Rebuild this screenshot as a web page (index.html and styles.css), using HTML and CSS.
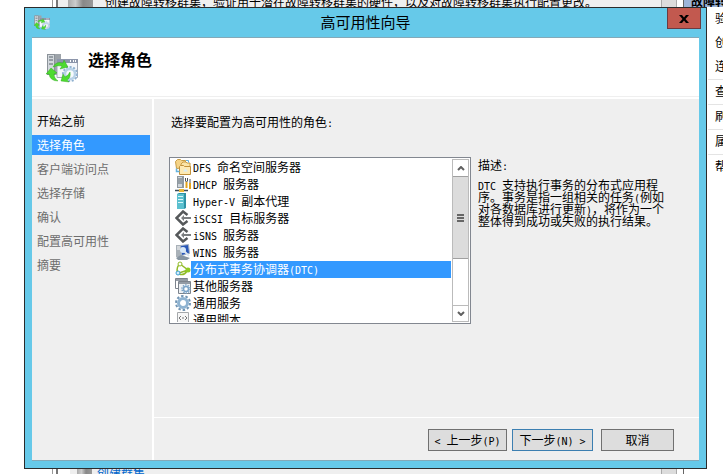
FILE: index.html
```
<!DOCTYPE html>
<html lang="zh-CN">

<head>
  <meta charset="UTF-8">
  <meta name="viewport" content="width=device-width, initial-scale=1.0">
  <title>高可用性向导</title>
  <link rel="stylesheet" href="styles.css">
</head>

<body>
  <!-- 图标 -->
  <svg class="defs" aria-hidden="true">
    <symbol id="i-wizard" viewBox="0 0 32 32">
      <path d="M1 1h14v21H1z" fill="#9da3a9" />
      <path d="M1 1h8v21H1z" fill="#8b9299" />
      <path d="M2 2h6v19H2z" fill="#d3d8dd" />
      <path d="M3 4h4M3 7h4M3 11h4" stroke="#59626b" stroke-width="1" />
      <path d="M11 6.500h20.500v18H11z" fill="#f5f7fb" stroke="#a3aab8" />
      <path d="M11 6h21v4H11z" fill="#8d96ab" />
      <path d="M24 8h1M27 8h1M29 8h1" stroke="#fff" stroke-width="2" />
      <circle cx="24" cy="21" r="7" fill="#eef5fb" stroke="#8fb0cf" stroke-width="2" stroke-dasharray="2 1.600" />
      <circle cx="24" cy="21" r="5" fill="#f7fafd" stroke="#b9d2e8" stroke-width="2.500" />
      <path d="M7 14q3-6 10-4l1-3 4 7-8 2 2-3q-4-1-9 1z" fill="#4edb30" stroke="#22a012" stroke-width=".4" />
      <path d="M0 21l5-6 6 5-3 1q0 4 4 7-8 0-9-7z" fill="#4edb30" stroke="#22a012" stroke-width=".4" />
      <path d="M24 19q1 6-3 8l2 2-8-1 2-7 2 3q3-1 5-5z" fill="#4edb30" stroke="#22a012" stroke-width=".4" />
    </symbol>
    <symbol id="i-dfs" viewBox="0 0 16 16">
      <path d="M.5 2.500l2-2h3l1 1h4v7l-9 1z" fill="#f5d488" stroke="#c79c45" />
      <path d="M6 5l2-2h3l1 1h3v6H6z" fill="#fbe5a6" stroke="#c79c45" />
      <path d="M4.500 7.500l1-1h3l1 1h6v8h-11z" fill="#fdeab3" stroke="#c0913b" />
      <path d="M8 12.500h5l-2.500-3z" fill="#d7ecf8" />
      <path d="M1.500 9.500v3h3" fill="none" stroke="#63b2de" stroke-width="1.500" />
      <path d="M11 1.500h2.500v2" fill="none" stroke="#63b2de" />
    </symbol>
    <symbol id="i-dhcp" viewBox="0 0 16 16">
      <path d="M2 0h7v12H2z" fill="#8f989f" />
      <path d="M3 1h4v10H3z" fill="#cfd5da" />
      <path d="M3 3h4M3 5h4M3 7h4" stroke="#5f6a73" />
      <path d="M11.500 6v6M15 7v6" fill="none" stroke="#e2a21c" stroke-width="2" />
      <path d="M10.500 2v3l1 1 1-1V2M15 3v4" fill="none" stroke="#4f5356" />
      <path d="M0 14.500h13" stroke="#3d4c58" stroke-width="1.500" />
      <path d="M4 13h5v3H4z" fill="#e8b638" />
    </symbol>
    <symbol id="i-hyperv" viewBox="0 0 16 16">
      <path d="M2 1l2-1h7v15l-2 1H2z" fill="#2d91a5" />
      <path d="M2 1h7v15H2z" fill="#5bc0cf" />
      <path d="M3 3.500h5M3 6.500h5M3 9.500h5" stroke="#d9f7fb" />
    </symbol>
    <symbol id="i-iscsi" viewBox="0 0 16 16">
      <path d="M12.500 5L8 1.500 1.500 8 8 14.500l4.500-3.500" fill="none" stroke="#55585a" stroke-width="2.500" />
      <path d="M6 8l3-3v2h7v2H9v2z" fill="#7b7e80" />
    </symbol>
    <symbol id="i-wins" viewBox="0 0 16 16">
      <path d="M1 1h5v12H1z" fill="#a9b1b8" />
      <path d="M2 3h3M2 5h3" stroke="#fff" />
      <path d="M5.500 1.500l8-1 1 9-8 2z" fill="#2857b8" stroke="#a9b6c5" />
      <circle cx="8" cy="6" r="3" fill="#d6e7f8" />
      <path d="M9 7l5 5" stroke="#dce6ee" stroke-width="2" />
      <path d="M1 14l5-3 9 3-3 2H3z" fill="#8795a1" />
    </symbol>
    <symbol id="i-dtc" viewBox="0 0 16 16">
      <path d="M5 3Q1 6 2.500 11M5 3l8 6-9 3M4 13q5 2 8-3" fill="none" stroke="#91bb27" stroke-width="1.500" />
      <circle cx="5" cy="3" r="2" fill="#fff" stroke="#91bb27" />
      <circle cx="3" cy="12" r="2" fill="#d8edf9" stroke="#3a9fd5" />
      <circle cx="13" cy="9" r="2.500" fill="#91cb24" />
    </symbol>
    <symbol id="i-other" viewBox="0 0 16 16">
      <path d="M.5.500h12v10H.5z" fill="#fff" stroke="#7c838c" />
      <path d="M3.500 3.500h12v12h-12z" fill="#eef1f4" stroke="#7c838c" />
      <path d="M1 1h12v2H1zM4 4h11v2H4z" fill="#939ba5" />
      <circle cx="11" cy="11" r="4" fill="#fff" stroke="#7ba3c7" stroke-width="1.500" stroke-dasharray="1.500 1" />
      <circle cx="11" cy="11" r="2.500" fill="none" stroke="#7ba3c7" stroke-width="1.500" />
    </symbol>
    <symbol id="i-gear" viewBox="0 0 16 16">
      <circle cx="8" cy="8" r="7" fill="none" stroke="#7295b4" stroke-width="2" stroke-dasharray="2.500 1.900" />
      <circle cx="8" cy="8" r="4.500" fill="#fff" stroke="#8fb3d1" stroke-width="3" />
    </symbol>
    <symbol id="i-script" viewBox="0 0 16 16">
      <path d="M2.500.5h11v15h-11z" fill="#f7f7f7" stroke="#a5a8ab" />
      <path d="M6 4L4 6l2 2M10 4l2 2-2 2M7 6h2" fill="none" stroke="#777" />
    </symbol>
  </svg>

  <!-- 后面的管理器窗口 -->
  <div class="manager">
    <div class="tree"></div>
    <div class="center">
      <div class="row">
        <span class="server"></span>
        <p>创建故障转移群集，验证用于潜在故障转移群集的硬件，以及对故障转移群集执行配置更改。</p>
      </div>
      <div class="row bottom">
        <span class="server"></span>
        <a href="#">创建群集...</a>
      </div>
    </div>
    <div class="track"></div>
    <div class="actions">
      <h2>故障转移群集管理器</h2>
      <ul>
        <li><a href="#">验证配置...</a></li>
        <li><a href="#">创建群集...</a></li>
        <li><a href="#">连接到群集...</a></li>
        <li class="line"><a href="#">查看</a></li>
        <li class="line"><a href="#">刷新</a></li>
        <li class="line"><a href="#">属性</a></li>
        <li class="line"><a href="#">帮助</a></li>
      </ul>
    </div>
  </div>

  <!-- 向导 -->
  <div class="dialog" role="dialog" aria-labelledby="title">
    <div class="titlebar">
      <svg class="icon"><use href="#i-wizard" /></svg>
      <h1 id="title">高可用性向导</h1>
      <button class="close" type="button" aria-label="关闭">
        <svg viewBox="0 0 10 8"><path d="M0 0h3l2 2.500L7 0h3L6.500 4 10 8H7L5 5.500 3 8H0l3.500-4z" /></svg>
      </button>
    </div>
    <div class="content">
      <div class="head">
        <svg class="logo"><use href="#i-wizard" /></svg>
        <h2>选择角色</h2>
      </div>
      <div class="main">
        <nav class="steps">
          <a class="done" href="#">开始之前</a>
          <a class="current" href="#">选择角色</a>
          <a href="#">客户端访问点</a>
          <a href="#">选择存储</a>
          <a href="#">确认</a>
          <a href="#">配置高可用性</a>
          <a href="#">摘要</a>
        </nav>
        <div class="page">
          <div class="body">
            <p class="tip" id="tip">选择要配置为高可用性的角色<i>:</i></p>
            <div class="pick">
              <div class="listbox">
                <ul aria-labelledby="tip">
                  <li><svg><use href="#i-dfs" /></svg><button type="button"><i>DFS </i>命名空间服务器</button></li>
                  <li><svg><use href="#i-dhcp" /></svg><button type="button"><i>DHCP </i>服务器</button></li>
                  <li><svg><use href="#i-hyperv" /></svg><button type="button"><i>Hyper-V </i>副本代理</button></li>
                  <li><svg><use href="#i-iscsi" /></svg><button type="button"><i>iSCSI </i>目标服务器</button></li>
                  <li><svg><use href="#i-iscsi" /></svg><button type="button"><i>iSNS </i>服务器</button></li>
                  <li><svg><use href="#i-wins" /></svg><button type="button"><i>WINS </i>服务器</button></li>
                  <li class="selected"><svg><use href="#i-dtc" /></svg><button type="button">分布式事务协调器<i>(DTC)</i></button></li>
                  <li><svg><use href="#i-other" /></svg><button type="button">其他服务器</button></li>
                  <li><svg><use href="#i-gear" /></svg><button type="button">通用服务</button></li>
                  <li><svg><use href="#i-script" /></svg><button type="button">通用脚本</button></li>
                </ul>
                <div class="scroll">
                  <button type="button" aria-label="向上滚动"><svg viewBox="0 0 8 5"><path d="M1 4l3-3 3 3" /></svg></button>
                  <div class="thumb"><span></span><span></span><span></span></div>
                  <button type="button" aria-label="向下滚动"><svg viewBox="0 0 8 5"><path d="M1 1l3 3 3-3" /></svg></button>
                </div>
              </div>
              <div class="desc">
                <h3>描述<i>:</i></h3>
                <p><i>DTC </i>支持执行事务的分布式应用程序。事务是指一组相关的任务<i>(</i>例如对各数据库进行更新<i>)</i>，将作为一个整体得到成功或失败的执行结果。</p>
              </div>
            </div>
          </div>
          <div class="foot">
            <button type="button"><i>&lt; </i>上一步<i>(P)</i></button>
            <button class="next" type="button">下一步<i>(N) &gt;</i></button>
            <button class="cancel" type="button">取消</button>
          </div>
        </div>
      </div>
    </div>
  </div>
</body>

</html>
```
FILE: styles.css
```
* {
  margin: 0;
  padding: 0;
  box-sizing: border-box;
  list-style: none;
}

body {
  height: 100vh;
  overflow: hidden;
  position: relative;
  background: #fff;
  color: #000;
  font: 12px/16px "Noto Sans CJK SC", sans-serif;
}

a {
  color: #000;
  text-decoration: none;
}

button {
  font: inherit;
  color: inherit;
}

/* 半角字符，宽度为汉字的一半 */
i {
  font: 10px/0 "DejaVu Sans Mono", monospace;
  white-space: pre-wrap;
}

.defs {
  display: none;
}

/* 后面的管理器窗口 */
.manager {
  display: flex;
  height: 100%;
}

.tree {
  width: 53px;
  border-right: 1px solid #999;
}

.center {
  flex: 1;
  display: flex;
  flex-direction: column;
  justify-content: space-between;
  margin-left: 3px;
  border-left: 2px solid #777;
  background: #efefef;
}

.row {
  display: flex;
  gap: 12px;
  height: 8px;
  padding-left: 10px;
  overflow: hidden;
  white-space: nowrap;
}

.row p {
  margin-top: -6px;
}

.row.bottom {
  height: 7px;
  padding-left: 7px;
  gap: 5px;
  border-left: 12px solid #fff;
}

.row a {
  color: #06c;
  margin-top: -2px;
}

.server {
  width: 25px;
  height: 7px;
  background: linear-gradient(90deg, #aaa, #ccc 30%, #888 60%, #999);
}

.bottom .server {
  width: 15px;
}

.track {
  width: 16px;
  background: #dcdcdc;
  border: solid #aaa;
  border-width: 0 1px;
}

.actions {
  width: 40px;
  margin-left: 6px;
  overflow: hidden;
  white-space: nowrap;
  border-left: 1px solid #666;
}

.actions h2 {
  height: 7px;
  padding-left: 7px;
  background: #9db5da;
  font-size: 12px;
  line-height: 2px;
}

.actions ul {
  padding-left: 24px;
}

.actions li {
  height: 24px;
  padding-left: 7px;
  line-height: 22px;
}

.actions .line {
  height: 25px;
  border-top: 1px solid #e4e4e4;
}

/* 向导窗口 */
.dialog {
  position: absolute;
  top: 7px;
  right: 16px;
  bottom: 5px;
  left: 24px;
  display: flex;
  flex-direction: column;
  padding: 0 7px 7px;
  border: 1px solid #2b2b2b;
  background: #66c9e9;
}

.titlebar {
  display: flex;
  height: 29px;
  align-items: center;
}

.titlebar .icon {
  width: 16px;
  height: 16px;
  margin-left: 2px;
}

.titlebar h1 {
  flex: 1;
  padding-left: 14px;
  text-align: center;
  font-size: 15px;
  line-height: 18px;
  padding-bottom: 2px;
  font-weight: normal;
}

.close {
  align-self: flex-start;
  width: 34px;
  height: 21px;
  margin-right: -2px;
  border: 1px solid #6b3b42;
  border-top: 0;
  background: #c2594f;
}

.close svg {
  width: 10px;
  height: 8px;
}

.content {
  flex: 1;
  display: flex;
  flex-direction: column;
  min-height: 0;
  border: solid #84a9b8;
  border-width: 1px 0;
  background: #efefef;
}

.head {
  display: flex;
  height: 61px;
  gap: 10px;
  padding: 13px 14px;
  background: linear-gradient(#fff 58px, #efefef 58px, #efefef 59px, #fff 59px);
}

.logo {
  width: 32px;
  height: 32px;
  margin-top: 2px;
}

.head h2 {
  font-size: 16px;
  line-height: 16px;
}

.main {
  flex: 1;
  display: flex;
}

.steps {
  width: 122px;
  padding: 12px 2px 0 0;
  border-right: 2px solid #fff;
}

.steps a {
  display: block;
  height: 20px;
  margin-bottom: 4px;
  padding-left: 5px;
  line-height: 20px;
  color: #6d6d6d;
}

.steps .done {
  color: #000;
}

.steps .current {
  background: #3399ff;
  color: #fff;
}

.page {
  flex: 1;
  display: flex;
  flex-direction: column;
}

.body {
  flex: 1;
  padding: 15px 27px 0 15px;
}

.tip {
  padding-left: 2px;
}

.pick {
  display: flex;
  gap: 7px;
  margin-top: 27px;
}

.listbox {
  display: flex;
  width: 302px;
  height: 167px;
  padding: 1px;
  border: 1px solid #828790;
  background: #fff;
}

.listbox ul {
  flex: 1;
  overflow: hidden;
}

.listbox li {
  display: flex;
  height: 17px;
  padding-left: 4px;
}

.listbox li svg {
  width: 16px;
  height: 16px;
}

.listbox li button {
  flex: 1;
  padding: 0 0 2px 2px;
  border: 0;
  background: none;
  text-align: left;
  line-height: 15px;
}

.listbox .selected button {
  background: #3399ff;
  color: #fff;
}

.scroll {
  display: flex;
  flex-direction: column;
  width: 17px;
  margin-left: 1px;
  border: 1px solid #bbb;
}

.scroll button {
  display: flex;
  align-items: center;
  justify-content: center;
  height: 16px;
  border: 0;
  background: #fff;
}

.scroll button:last-child {
  margin-top: auto;
  border-top: 1px solid #bbb;
}

.scroll svg {
  width: 8px;
  height: 5px;
  fill: none;
  stroke: #606060;
  stroke-width: 2;
}

.thumb {
  display: flex;
  flex-direction: column;
  align-items: center;
  justify-content: center;
  gap: 1px;
  height: 83px;
  border: solid #a0a0a0;
  border-width: 1px 0;
  background: #dcdcdc;
}

.thumb span {
  width: 7px;
  height: 2px;
  background: #666;
}

.desc {
  flex: 1;
}

.desc h3 {
  font-size: 12px;
  font-weight: normal;
}

.desc p {
  margin-top: 6px;
  line-height: 12px;
}

.foot {
  display: flex;
  justify-content: flex-end;
  height: 43px;
  padding: 11px 25px 9px 0;
  border-top: 1px solid #fff;
}

.foot button {
  width: 79px;
  margin-right: 5px;
  border: 1px solid #707070;
  background: #dddddd;
  line-height: 20px;
}

.foot .next {
  width: 81px;
  margin-right: 8px;
  border-color: #3c7fb1;
}

.foot .cancel {
  width: 73px;
  margin-right: 0;
}
```
